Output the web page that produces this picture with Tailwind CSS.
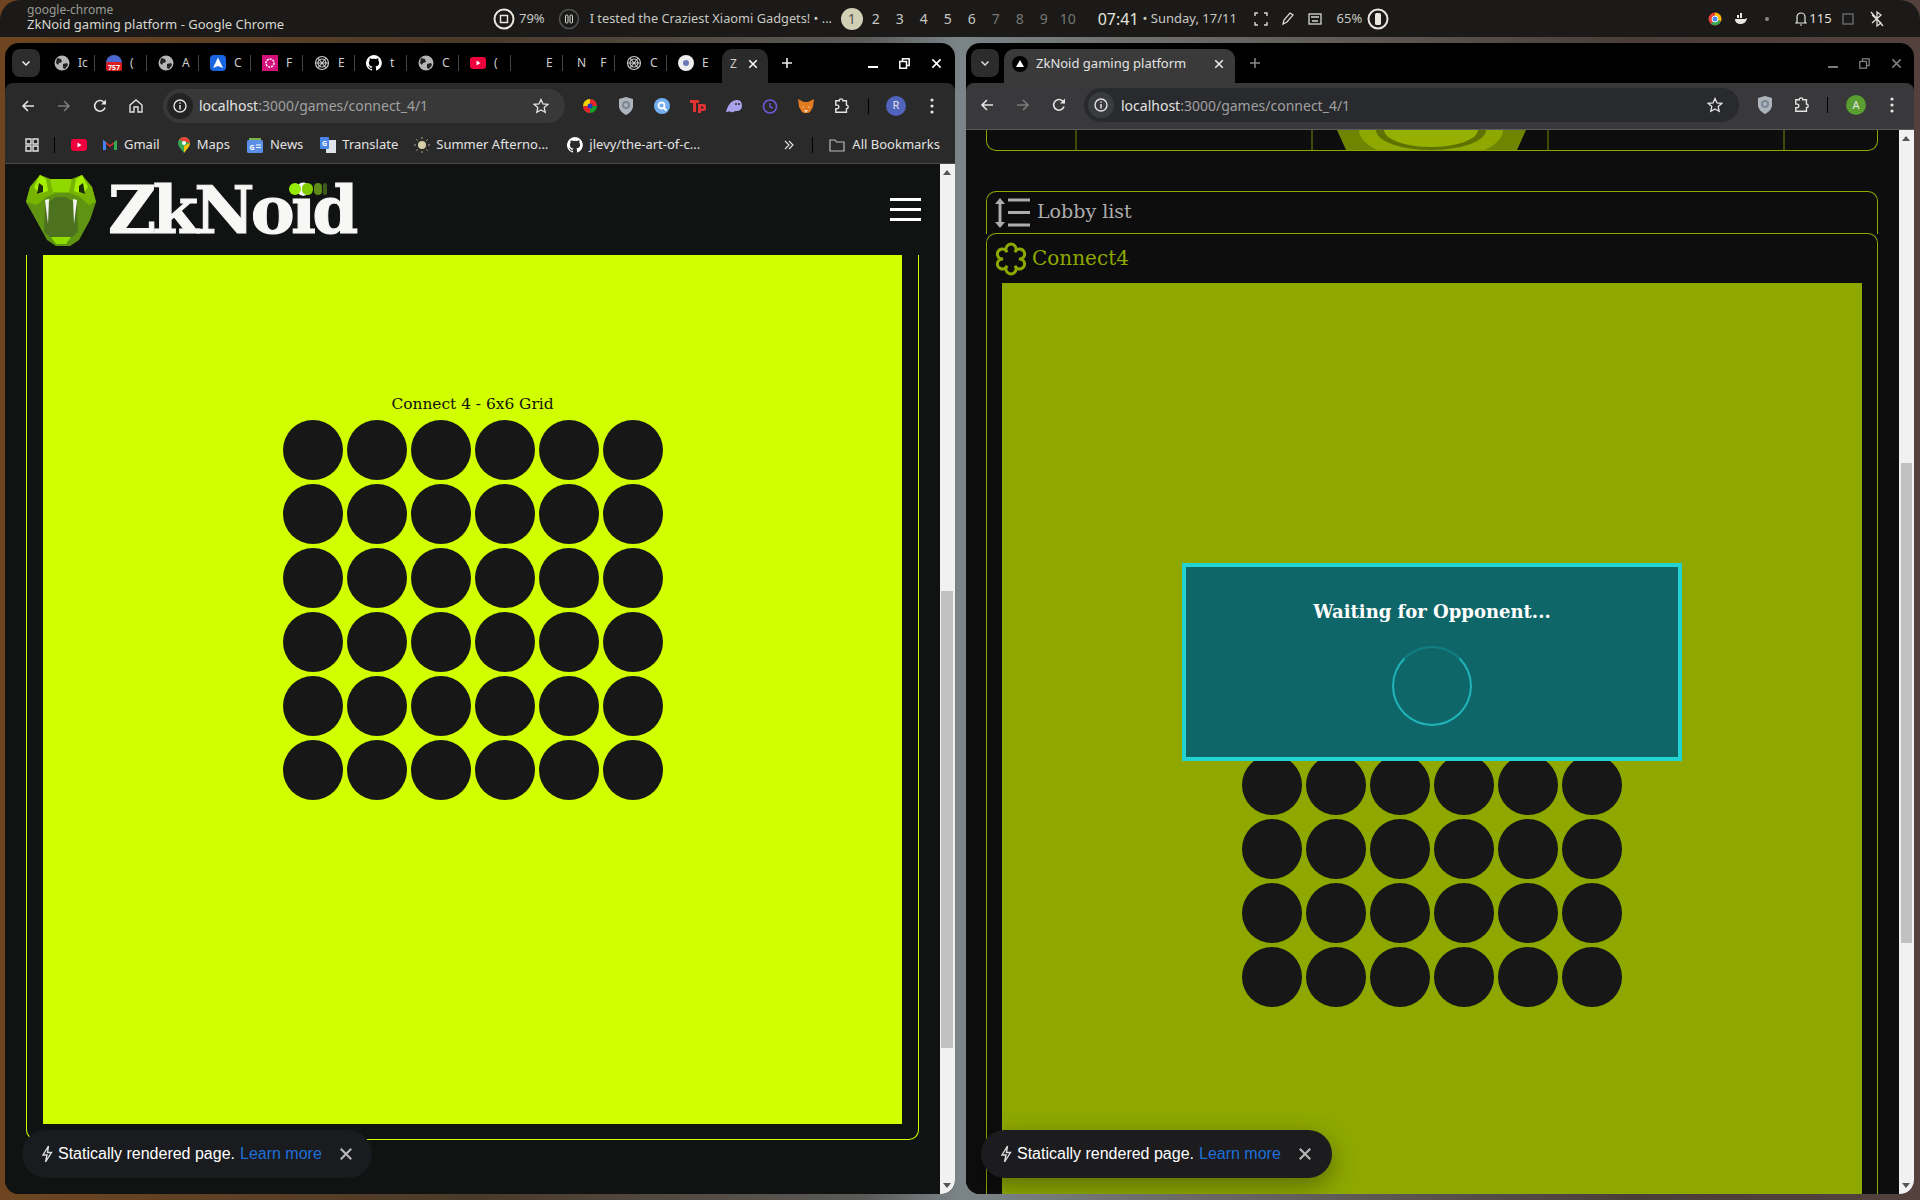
<!DOCTYPE html>
<html lang="en">
  <head>
    <meta charset="UTF-8" />
    <title>ZkNoid gaming platform - Google Chrome</title>
    <script src="https://cdn.jsdelivr.net/npm/@tailwindcss/browser@4"></script>
  </head>
  <body class="bg-black">
    <svg class="hidden">
      <symbol id="globe" viewBox="0 0 16 16"><circle cx="8" cy="8" r="7.5" fill="#b5b5b5" /><path d="M3 3l4 1 1 3-3 1-1 2-2-2zM9 9l4-1 1 2-3 4-2-1z" fill="#222" /></symbol>
      <symbol id="openai" viewBox="0 0 16 16"><g fill="none" stroke="#c8c8c8" stroke-width="1.2"><circle cx="8" cy="8" r="6.5" /><circle cx="8" cy="8" r="4" /><path d="M4 3l8 10M12 3L4 13M2 8h12" /></g></symbol>
      <symbol id="github" viewBox="0 0 16 16"><path fill="#fff" d="M8 0a8 8 0 0 0-2.5 15.6c.4.1.5-.2.5-.4v-1.4c-2.2.5-2.7-1-2.7-1-.4-.9-.9-1.200-.9-1.200-.7-.5.1-.5.1-.5.8.1 1.200.8 1.200.8.7 1.200 1.900.9 2.300.7.1-.5.3-.9.5-1.100-1.800-.2-3.600-.9-3.600-4 0-.9.3-1.600.8-2.100-.1-.2-.4-1 .1-2.100 0 0 .7-.2 2.200.8a7.600 7.600 0 0 1 4 0c1.500-1 2.200-.8 2.200-.8.4 1.100.2 1.900.1 2.100.5.6.8 1.300.8 2.100 0 3.100-1.900 3.700-3.700 3.900.3.300.6.800.6 1.500v2.200c0 .2.100.5.6.4A8 8 0 0 0 8 0z" /></symbol>
      <symbol id="yt" viewBox="0 0 16 12"><rect width="16" height="12" rx="3" fill="#f0003c" /><path d="M6.500 3.500l4 2.500-4 2.500z" fill="#fff" /></symbol>
      <symbol id="back" viewBox="0 0 16 16"><path d="M14 8H3M8 3L3 8l5 5" fill="none" stroke="currentColor" stroke-width="1.600" /></symbol>
      <symbol id="forward" viewBox="0 0 16 16"><path d="M2 8h11M8 3l5 5-5 5" fill="none" stroke="currentColor" stroke-width="1.600" /></symbol>
      <symbol id="reload" viewBox="0 0 16 16"><path d="M13 9.500A5.300 5.300 0 1 1 11.800 4.200L13.500 6" fill="none" stroke="currentColor" stroke-width="1.600" /><path d="M14 1.500V6.500H9z" fill="currentColor" /></symbol>
      <symbol id="info" viewBox="0 0 16 16"><circle cx="8" cy="8" r="6" fill="none" stroke="currentColor" stroke-width="1.400" /><path d="M8 7v4.500M8 4.500v1.300" stroke="currentColor" stroke-width="1.500" /></symbol>
      <symbol id="star" viewBox="0 0 16 16"><path d="M8 1.500l2 4.400 4.800.5-3.600 3.200 1 4.700L8 11.900l-4.200 2.400 1-4.700L1.200 6.400 6 5.900z" fill="none" stroke="currentColor" stroke-width="1.300" /></symbol>
      <symbol id="puzzle" viewBox="0 0 18 18"><path d="M2 3h4a2 2 0 0 1 4 0h4v5a2 2 0 0 1 0 4v4H2v-4h1.500a2 2 0 0 0 0-4H2z" fill="none" stroke="currentColor" stroke-width="1.600" /></symbol>
      <symbol id="dots" viewBox="0 0 4 16"><circle cx="2" cy="2" r="1.600" fill="currentColor" /><circle cx="2" cy="8" r="1.600" fill="currentColor" /><circle cx="2" cy="14" r="1.600" fill="currentColor" /></symbol>
      <symbol id="shield" viewBox="0 0 16 18"><path d="M8 0l7 2v7c0 4-3 7-7 9-4-2-7-5-7-9V2z" fill="#aeb4bc" /><circle cx="8" cy="8" r="4" fill="#7d8794" /><circle cx="8" cy="8" r="2" fill="#aeb4bc" /></symbol>
      <symbol id="close" viewBox="0 0 12 12"><path d="M1.500 1.500l9 9M10.500 1.500l-9 9" stroke="currentColor" stroke-width="1.800" /></symbol>
      <symbol id="bolt" viewBox="0 0 12 18"><path d="M7.500 1L2 10h4l-1.500 7L10.500 7.500H6.500z" fill="none" stroke="currentColor" stroke-width="1.400" /></symbol>
    </svg>

    <div class="relative w-[1920px] h-[1200px] overflow-hidden bg-[linear-gradient(90deg,#6e4520_0%,#4a3a2a_25%,#5a5a58_45%,#7b8488_50%,#6d6d6a_60%,#4a3d38_85%,#54413e_100%)]" style="font-family: 'Noto Sans', sans-serif">
      <!-- top bar -->
      <div class="absolute inset-x-0 top-0 h-[37px] bg-[#1b1a19] rounded-t-[20px] flex items-center text-[#d8d8d0]">
        <div class="ml-[27px] w-[466px] leading-[14px] pb-[4px]">
          <div class="text-[12px] text-[#9a9a94]">google-chrome</div>
          <div class="text-[13px] whitespace-nowrap">ZkNoid gaming platform - Google Chrome</div>
        </div>
        <svg class="w-[22px] h-[22px]" viewBox="0 0 22 22"><circle cx="11" cy="11" r="9.500" fill="none" stroke="#e8e8e0" stroke-width="2" /><rect x="7.500" y="7.500" width="7" height="7" fill="none" stroke="#e8e8e0" stroke-width="1.500" /></svg>
        <span class="ml-[4px] text-[13px] text-[#c8c8c0]">79%</span>
        <svg class="ml-[13px] w-[22px] h-[22px]" viewBox="0 0 22 22"><circle cx="11" cy="11" r="9.500" fill="none" stroke="#555" stroke-width="1.500" /><rect x="7.500" y="7" width="2.500" height="8" rx="1" fill="none" stroke="#d8d8d0" /><rect x="12" y="7" width="2.500" height="8" rx="1" fill="none" stroke="#d8d8d0" /></svg>
        <span class="ml-[10px] w-[251px] text-[12.8px] text-[#c8c8c0] whitespace-nowrap">I tested the Craziest Xiaomi Gadgets! • ...</span>
        <div class="flex items-center text-[14px] text-[#c8c8c0]">
          <span class="w-[22px] h-[22px] mr-[1px] rounded-full bg-[#d2d0b4] text-[#555] flex items-center justify-center">1</span>
          <span class="w-[24px] text-center">2</span><span class="w-[24px] text-center">3</span><span class="w-[24px] text-center">4</span><span class="w-[24px] text-center">5</span><span class="w-[24px] text-center">6</span>
          <span class="w-[24px] text-center text-[#77776f]">7</span><span class="w-[24px] text-center text-[#77776f]">8</span><span class="w-[24px] text-center text-[#77776f]">9</span><span class="w-[24px] text-center text-[#77776f]">10</span>
        </div>
        <span class="ml-[18px] text-[16px] text-[#e4e4dc]">07:41</span>
        <span class="ml-[4px] text-[13px] w-[106px] text-[#c8c8c0] whitespace-nowrap">• Sunday, 17/11</span>
        <svg class="ml-[5px] w-[14px] h-[14px] text-[#d8d8d0]" viewBox="0 0 14 14"><path d="M1 4V1h3M10 1h3v3M13 10v3h-3M4 13H1v-3" fill="none" stroke="currentColor" stroke-width="1.400" /></svg>
        <svg class="ml-[13px] w-[14px] h-[14px]" viewBox="0 0 14 14"><path d="M2 12l1-4 6-7 3 2-6 7z" fill="none" stroke="#d8d8d0" stroke-width="1.300" /></svg>
        <svg class="ml-[13px] w-[14px] h-[14px]" viewBox="0 0 14 14"><rect x="1" y="2" width="12" height="10" fill="none" stroke="#d8d8d0" stroke-width="1.300" /><path d="M3 5h8M4 9h6" stroke="#d8d8d0" stroke-width="1.300" /></svg>
        <span class="ml-[15px] text-[13px] text-[#c8c8c0]">65%</span>
        <svg class="ml-[5px] w-[22px] h-[22px]" viewBox="0 0 22 22"><circle cx="11" cy="11" r="9.500" fill="none" stroke="#e8e8e0" stroke-width="2" /><rect x="8" y="5" width="6" height="12" rx="1.500" fill="#e8e8e0" /></svg>
        <div class="ml-[319px] flex items-center">
          <svg class="w-[14px] h-[14px]" viewBox="0 0 14 14"><circle cx="7" cy="7" r="6.500" fill="#ea4335" /><path d="M7 7l6 2a6.500 6.500 0 0 1-10 3z" fill="#34a853" /><path d="M7 .5a6.500 6.500 0 0 1 6 8.500L7 7z" fill="#fbbc05" /><circle cx="7" cy="7" r="3" fill="#4285f4" stroke="#fff" /></svg>
          <svg class="ml-[12px] w-[14px] h-[14px]" viewBox="0 0 14 14"><path d="M1 7h10l2-1c0 2-2 6-6 6S1 10 1 7z" fill="#e8e8e0" /><path d="M3 3h2v3H3zM6 1h2v5H6z" fill="#e8e8e0" /></svg>
          <span class="ml-[17px] w-[4px] h-[4px] rounded-full bg-[#888]"></span>
          <svg class="ml-[26px] w-[12px] h-[15px]" viewBox="0 0 12 15"><path d="M2 11V6a4 4 0 0 1 8 0v5l1 1H1zM5 14h2" fill="none" stroke="#e8e8e0" stroke-width="1.200" /></svg>
          <span class="ml-[2px] text-[13px] text-[#e0e0d8]">115</span>
          <svg class="ml-[10px] w-[12px] h-[12px]" viewBox="0 0 12 12"><rect x="1" y="1" width="10" height="10" fill="none" stroke="#666" stroke-width="1.500" /></svg>
          <svg class="ml-[16px] w-[14px] h-[16px]" viewBox="0 0 14 16"><path d="M2 4l9 8-4 3V1l4 3-9 8M1 1l12 14" fill="none" stroke="#e0e0d8" stroke-width="1.300" /></svg>
        </div>
      </div>

      <!-- left window -->
      <div class="absolute left-[5px] top-[43px] w-[950px] h-[1151px] rounded-t-[14px] rounded-b-[14px] overflow-hidden bg-black flex flex-col">
        <div class="h-[40px] flex items-center shrink-0 relative">
          <div class="ml-[7px] w-[28px] h-[28px] rounded-lg bg-[#2d2d2d] flex items-center justify-center">
            <svg class="w-[10px] h-[10px]" viewBox="0 0 10 10"><path d="M1.500 3.500L5 7l3.500-3.500" fill="none" stroke="#eee" stroke-width="1.500" /></svg>
          </div>
          <div class="ml-[3px] flex items-center text-[12px] text-[#cfcfcf]">
            <div class="w-[52px] h-[16px] flex items-center border-r border-[#444]"><svg class="ml-[11px] w-[16px] h-[16px]"><use href="#globe" /></svg><span class="ml-[8px]">Ic</span></div>
            <div class="w-[52px] h-[16px] flex items-center border-r border-[#444]"><svg class="ml-[11px] w-[16px] h-[16px]" viewBox="0 0 16 16"><path d="M0 8a8 8 0 0 1 16 0z" fill="#4a68d0" /><rect y="7" width="16" height="9" rx="2" fill="#d81e1e" /><text x="8" y="14.500" font-size="7" font-weight="700" text-anchor="middle" fill="#fff">757</text></svg><span class="ml-[8px]">(</span></div>
            <div class="w-[52px] h-[16px] flex items-center border-r border-[#444]"><svg class="ml-[11px] w-[16px] h-[16px]"><use href="#globe" /></svg><span class="ml-[8px]">A</span></div>
            <div class="w-[52px] h-[16px] flex items-center border-r border-[#444]"><svg class="ml-[11px] w-[16px] h-[16px]" viewBox="0 0 16 16"><rect width="16" height="16" rx="4" fill="#1a66e0" /><path d="M8 2.500L13 13l-5-2-5 2z" fill="#fff" /></svg><span class="ml-[8px]">C</span></div>
            <div class="w-[52px] h-[16px] flex items-center border-r border-[#444]"><svg class="ml-[11px] w-[16px] h-[16px]" viewBox="0 0 16 16"><rect width="16" height="16" fill="#d4107a" /><circle cx="8" cy="8" r="4" fill="none" stroke="#fff" stroke-width="1.500" stroke-dasharray="2 1" /></svg><span class="ml-[8px]">F</span></div>
            <div class="w-[52px] h-[16px] flex items-center border-r border-[#444]"><svg class="ml-[11px] w-[16px] h-[16px]"><use href="#openai" /></svg><span class="ml-[8px]">E</span></div>
            <div class="w-[52px] h-[16px] flex items-center border-r border-[#444]"><svg class="ml-[11px] w-[16px] h-[16px]"><use href="#github" /></svg><span class="ml-[8px]">t</span></div>
            <div class="w-[52px] h-[16px] flex items-center border-r border-[#444]"><svg class="ml-[11px] w-[16px] h-[16px]"><use href="#globe" /></svg><span class="ml-[8px]">C</span></div>
            <div class="w-[52px] h-[16px] flex items-center border-r border-[#444]"><svg class="ml-[11px] w-[16px] h-[12px]"><use href="#yt" /></svg><span class="ml-[8px]">(</span></div>
            <div class="w-[52px] h-[16px] flex items-center border-r border-[#444]"><span class="ml-[35px]">E</span></div>
            <div class="w-[52px] h-[16px] flex items-center border-r border-[#444]"><span class="ml-[14px]">N</span><span class="ml-[14px]">F</span></div>
            <div class="w-[52px] h-[16px] flex items-center border-r border-[#444]"><svg class="ml-[11px] w-[16px] h-[16px]"><use href="#openai" /></svg><span class="ml-[8px]">C</span></div>
            <div class="w-[52px] h-[16px] flex items-center"><svg class="ml-[11px] w-[16px] h-[16px]" viewBox="0 0 16 16"><circle cx="8" cy="8" r="8" fill="#eee" /><circle cx="8" cy="8" r="3" fill="#6a78b8" /></svg><span class="ml-[8px]">E</span></div>
            <div class="ml-[3px] w-[46px] h-[34px] mt-[6px] pb-[5px] rounded-t-[10px] bg-[#2a2a2a] flex items-center"><span class="ml-[8px]">Z</span><svg class="ml-[11px] w-[10px] h-[10px] text-white"><use href="#close" /></svg></div>
            <svg class="ml-[13px] w-[12px] h-[12px]" viewBox="0 0 12 12"><path d="M6 1v10M1 6h10" stroke="#eee" stroke-width="1.600" /></svg>
          </div>
          <div class="ml-auto mr-[13px] flex items-center gap-[21px]">
            <span class="w-[10px] h-[2px] bg-white mt-[8px]"></span>
            <svg class="w-[11px] h-[11px]" viewBox="0 0 11 11"><rect x="3.500" y=".8" width="6.700" height="6.700" fill="none" stroke="#fff" stroke-width="1.500" /><rect x=".8" y="3.500" width="6.700" height="6.700" fill="#000" stroke="#fff" stroke-width="1.500" /></svg>
            <svg class="w-[11px] h-[11px] text-white"><use href="#close" /></svg>
          </div>
        </div>
        <div class="h-[47px] pb-[2px] bg-[#2a2a2a] rounded-t-[8px] flex items-center shrink-0 text-[#e3e3e3]">
          <svg class="ml-[15px] w-[16px] h-[16px]"><use href="#back" /></svg>
          <svg class="ml-[20px] w-[16px] h-[16px] text-[#7a7a7a]"><use href="#forward" /></svg>
          <svg class="ml-[20px] w-[16px] h-[16px]"><use href="#reload" /></svg>
          <svg class="ml-[20px] w-[16px] h-[16px]" viewBox="0 0 16 16"><path d="M2 7l6-5 6 5v7h-4v-5H6v5H2z" fill="none" stroke="currentColor" stroke-width="1.400" /></svg>
          <div class="ml-[19px] w-[402px] h-[34px] rounded-full bg-[#383838] flex items-center">
            <div class="ml-[4px] w-[26px] h-[26px] rounded-full bg-[#232323] flex items-center justify-center"><svg class="w-[16px] h-[16px]"><use href="#info" /></svg></div>
            <span class="ml-[6px] text-[14px] whitespace-nowrap text-[#e3e3e3]">localhost<span class="text-[#a0a0a0]">:3000/games/connect_4/1</span></span>
            <svg class="ml-auto mr-[16px] w-[16px] h-[16px]"><use href="#star" /></svg>
          </div>
          <div class="ml-[17px] flex items-center gap-[20px]">
            <svg class="w-[16px] h-[16px]" viewBox="0 0 16 16"><circle cx="8" cy="8" r="7" fill="#18a02a" /><path d="M8 1a7 7 0 0 1 7 7H8zM1 8a7 7 0 0 0 7 7V8z" fill="#e8222a" /><path d="M8 1a7 7 0 0 0-7 7h7z" fill="#f2d500" /><circle cx="8" cy="8" r="2.500" fill="#2038c8" /></svg>
            <svg class="w-[16px] h-[18px]"><use href="#shield" /></svg>
            <svg class="w-[16px] h-[16px]" viewBox="0 0 16 16"><circle cx="8" cy="8" r="8" fill="#72aef0" /><circle cx="7.500" cy="7.500" r="3" fill="none" stroke="#fff" stroke-width="1.800" /><path d="M10 10l2.500 2.500" stroke="#fff" stroke-width="1.800" /></svg>
            <svg class="w-[16px] h-[16px]" viewBox="0 0 16 16"><path d="M0 2h9v3H6v9H3V5H0zM8 6h5a3 3 0 0 1 0 7h-2v2H8zM11 8.500v2h1.500a1 1 0 0 0 0-2z" fill="#e03232" /></svg>
            <svg class="w-[16px] h-[16px]" viewBox="0 0 16 16"><path d="M0 14C2 6 6 2 11 2c4 0 5 3 5 6s-2 5-6 5c-2 0-3 2-5 1s-3 0-5 0z" fill="#a9a1ea" /><circle cx="10" cy="6" r="1" fill="#2a2a2a" /><circle cx="13" cy="6" r="1" fill="#2a2a2a" /></svg>
            <svg class="w-[16px] h-[16px]" viewBox="0 0 16 16"><circle cx="8" cy="8.500" r="6.500" fill="none" stroke="#6a5ad8" stroke-width="1.600" /><path d="M8 5v4l3 1" fill="none" stroke="#6a5ad8" stroke-width="1.400" /></svg>
            <svg class="w-[16px] h-[16px]" viewBox="0 0 16 16"><path d="M0 1l6 3h4l6-3-1 8-3 5-2 1H6l-2-1-3-5z" fill="#e27a20" /><path d="M4 8l2 1-1 1zM12 8l-2 1 1 1zM6 12h4l-2 3z" fill="#fff" opacity=".7" /></svg>
            <svg class="w-[16px] h-[16px]"><use href="#puzzle" /></svg>
          </div>
          <span class="ml-[18px] w-[1px] h-[16px] bg-black"></span>
          <span class="ml-[17px] w-[20px] h-[20px] rounded-full bg-[#5164bd] text-[11px] flex items-center justify-center">R</span>
          <svg class="ml-[24px] w-[4px] h-[16px]"><use href="#dots" /></svg>
        </div>
        <div class="h-[29px] pb-[4px] bg-[#2a2a2a] border-b border-[#4a4a4a] box-content flex items-center shrink-0 text-[13px] text-[#e3e3e3] whitespace-nowrap">
          <svg class="ml-[20px] w-[14px] h-[14px]" viewBox="0 0 14 14"><path d="M1 1h5v5H1zM8 1h5v5H8zM1 8h5v5H1zM8 8h5v5H8z" fill="none" stroke="#e3e3e3" stroke-width="1.400" /></svg>
          <span class="ml-[15px] w-[1px] h-[16px] bg-black"></span>
          <svg class="ml-[16px] w-[16px] h-[12px]"><use href="#yt" /></svg>
          <svg class="ml-[16px] w-[14px] h-[11px]" viewBox="0 0 14 11"><path d="M0 11V1l7 5 7-5v10h-3V5L7 8 3 5v6z" fill="#d93025" /><path d="M0 11V1l3 2v8z" fill="#4285f4" /><path d="M14 11V1l-3 2v8z" fill="#34a853" /></svg>
          <span class="ml-[7px]">Gmail</span>
          <svg class="ml-[18px] w-[12px] h-[16px]" viewBox="0 0 12 16"><path d="M6 0a6 6 0 0 1 6 6c0 3-3 6-6 10C3 12 0 9 0 6a6 6 0 0 1 6-6z" fill="#34a853" /><path d="M6 0a6 6 0 0 1 6 6L1 3a6 6 0 0 1 5-3z" fill="#ea4335" /><path d="M12 6c0 3-3 6-6 10V9z" fill="#fbbc05" /><circle cx="6" cy="6" r="2" fill="#fff" /></svg>
          <span class="ml-[7px]">Maps</span>
          <svg class="ml-[17px] w-[16px] h-[16px]" viewBox="0 0 16 16"><rect y="3" width="16" height="13" rx="1.500" fill="#5b8fe8" /><path d="M2 3V1h12v2z" fill="#7cb342" /><text x="5" y="13" font-size="7" font-weight="700" text-anchor="middle" fill="#fff">G</text><path d="M9 8h5M9 10.500h5" stroke="#fff" /></svg>
          <span class="ml-[7px]">News</span>
          <svg class="ml-[17px] w-[16px] h-[16px]" viewBox="0 0 16 16"><rect x="6" y="3" width="10" height="13" fill="#dfe3ea" /><rect width="9" height="12" rx="1" fill="#4a86e8" /><text x="4.500" y="9" font-size="7" font-weight="700" text-anchor="middle" fill="#fff">G</text></svg>
          <span class="ml-[6px]">Translate</span>
          <svg class="ml-[16px] w-[16px] h-[16px]" viewBox="0 0 16 16"><circle cx="8" cy="8" r="4" fill="#d8cfa8" /><path d="M8 0v2M8 14v2M0 8h2M14 8h2M2.300 2.300l1.400 1.400M12.300 12.300l1.400 1.400M13.700 2.300l-1.400 1.400M3.700 12.300l-1.400 1.400" stroke="#b0a888" /></svg>
          <span class="ml-[6px]">Summer Afterno...</span>
          <svg class="ml-[19px] w-[16px] h-[16px]"><use href="#github" /></svg>
          <span class="ml-[6px] w-[195px]">jlevy/the-art-of-c...</span>
          <svg class="w-[10px] h-[10px]" viewBox="0 0 10 10"><path d="M1 1l4 4-4 4M5 1l4 4-4 4" fill="none" stroke="#ddd" stroke-width="1.200" /></svg>
          <span class="ml-[18px] w-[1px] h-[16px] bg-black"></span>
          <svg class="ml-[16px] w-[16px] h-[14px]" viewBox="0 0 16 14"><path d="M1 2h5l1.500 2H15v9H1z" fill="none" stroke="#bbb" stroke-width="1.200" /></svg>
          <span class="ml-[7px]">All Bookmarks</span>
        </div>
        <div class="flex-1 min-h-0 flex bg-[#111212] relative">
          <div class="flex-1 flex flex-col">
            <div class="h-[91px] shrink-0 flex items-center">
              <svg class="ml-[21px] w-[70px] h-[72px]" viewBox="0 0 70 72">
                <path d="M14 1l10 4h22l10-4 10 12 4 15-6 18-11 20-9 6H30l-9-6L10 46 0 28 4 13z" fill="#5f9412" />
                <path d="M14 1l10 4h22l10-4 10 12 4 15-7 3-9-8-10-4H30l-10 4-9 8-11-3 4-15z" fill="#76b400" />
                <path d="M24 5h22l-3 13H27z" fill="#8fd800" />
                <path d="M14 1l6 4 2 12-9 3-5-7z" fill="#a5ef00" />
                <path d="M56 1l-6 4-2 12 9 3 5-7z" fill="#a5ef00" />
                <path d="M13 9l4 3 0 6-6 2zM57 9l-4 3 0 6 6 2z" fill="#1c2a08" />
                <path d="M19 30l11-7h10l11 7 1 28-7 6H25l-7-6z" fill="#4c7220" />
                <path d="M25 63h20l-5 7H30z" fill="#8fdc00" />
                <path d="M19 26l4-1-1 25zM51 26l-4-1 1 25z" fill="#f4f4f4" />
              </svg>
              <div class="relative ml-[12px]">
                <span class="block text-[66px] leading-none font-bold text-[#f7f7f5] tracking-[-3.8px] [-webkit-text-stroke:1px_#f7f7f5]" style="font-family: 'DejaVu Serif', serif">ZkNoid</span>
                <div class="absolute right-[28px] top-[6px] flex gap-[1px]">
                  <span class="w-[12px] h-[12px] rounded-full bg-[#96ec00]"></span>
                  <span class="w-[11px] h-[12px] rounded-full bg-[#80cc00]"></span>
                  <span class="w-[8px] h-[12px] rounded-full bg-[#5d8a18]"></span>
                  <span class="w-[4px] h-[12px] rounded-full bg-[#3f5c1c]"></span>
                </div>
              </div>
              <div class="ml-auto mr-[19px] w-[31px] flex flex-col gap-[7px]">
                <span class="h-[3px] bg-white"></span><span class="h-[3px] bg-white"></span><span class="h-[3px] bg-white"></span>
              </div>
            </div>
            <div class="mx-[21px] h-[885px] border-x border-b border-[#d2ff00] rounded-b-[10px] px-[16px] pb-[15px]">
              <div class="h-full bg-[#d2ff00] flex flex-col items-center pt-[139px]" style="font-family: 'DejaVu Serif', serif">
                <div class="text-[15.4px] leading-[20px] text-[#111] mb-[6px] whitespace-nowrap">Connect 4 - 6x6 Grid</div>
                <div data-board class="grid grid-cols-6 gap-[4px]"></div>
              </div>
            </div>
          </div>
          <div class="w-[15px] bg-[#f1f1f1] relative">
            <span class="absolute left-[3px] top-[6px] border-x-[4px] border-x-transparent border-b-[5px] border-b-[#555]"></span>
            <div class="absolute left-[1px] right-[2px] top-[427px] h-[457px] bg-[#c1c1c1]"></div>
            <span class="absolute left-[3px] bottom-[6px] border-x-[4px] border-x-transparent border-t-[5px] border-t-[#555]"></span>
          </div>
          <div class="absolute left-[17px] top-[966px] h-[48px] w-[350px] rounded-full bg-[#1a1b1f] flex items-center text-white text-[16px] whitespace-nowrap" style="font-family: 'Liberation Sans', sans-serif">
            <svg class="ml-[19px] w-[12px] h-[18px] text-[#ddd]"><use href="#bolt" /></svg>
            <span class="ml-[5px]">Statically rendered page.</span>
            <span class="ml-[5px] text-[#1f6fd8]">Learn more</span>
            <svg class="ml-[17px] w-[14px] h-[14px] text-[#b8b8b8]"><use href="#close" /></svg>
          </div>
        </div>
      </div>

      <!-- right window -->
      <div class="absolute left-[966px] top-[43px] w-[948px] h-[1151px] rounded-t-[14px] rounded-b-[14px] overflow-hidden bg-black flex flex-col">
        <div class="h-[40px] flex items-center shrink-0">
          <div class="ml-[5px] w-[28px] h-[28px] rounded-lg bg-[#2c2c2c] flex items-center justify-center">
            <svg class="w-[10px] h-[10px]" viewBox="0 0 10 10"><path d="M1.500 3.500L5 7l3.500-3.500" fill="none" stroke="#ddd" stroke-width="1.500" /></svg>
          </div>
          <div class="ml-[5px] mt-[6px] w-[231px] h-[34px] pb-[5px] rounded-t-[10px] bg-[#3a3a3a] flex items-center text-[13px] text-[#e3e3e3]">
            <svg class="ml-[8px] w-[16px] h-[16px]" viewBox="0 0 16 16"><circle cx="8" cy="8" r="8" fill="#000" /><path d="M8 4l4 7H4z" fill="#fff" /></svg>
            <span class="ml-[8px]">ZkNoid gaming platform</span>
            <svg class="ml-auto mr-[11px] w-[10px] h-[10px] text-[#eee]"><use href="#close" /></svg>
          </div>
          <svg class="ml-[14px] w-[12px] h-[12px]" viewBox="0 0 12 12"><path d="M6 1v10M1 6h10" stroke="#888" stroke-width="1.500" /></svg>
          <div class="ml-auto mr-[12px] flex items-center gap-[21px] text-[#7c7c7c]">
            <span class="w-[10px] h-[1.500px] bg-[#7c7c7c] mt-[8px]"></span>
            <svg class="w-[11px] h-[11px]" viewBox="0 0 11 11"><rect x="3.500" y=".8" width="6.700" height="6.700" fill="none" stroke="#7c7c7c" stroke-width="1.300" /><rect x=".8" y="3.500" width="6.700" height="6.700" fill="#000" stroke="#7c7c7c" stroke-width="1.300" /></svg>
            <svg class="w-[11px] h-[11px]"><use href="#close" /></svg>
          </div>
        </div>
        <div class="h-[47px] pb-[2px] bg-[#39393b] border-b border-[#5a5a5a] rounded-t-[8px] flex items-center shrink-0 text-[#e3e3e3]">
          <svg class="ml-[13px] w-[16px] h-[16px]"><use href="#back" /></svg>
          <svg class="ml-[20px] w-[16px] h-[16px] text-[#7a7a7a]"><use href="#forward" /></svg>
          <svg class="ml-[20px] w-[16px] h-[16px]"><use href="#reload" /></svg>
          <div class="ml-[17px] w-[655px] h-[34px] rounded-full bg-[#292a2d] flex items-center">
            <div class="ml-[4px] w-[26px] h-[26px] rounded-full bg-[#3a3b3e] flex items-center justify-center"><svg class="w-[16px] h-[16px]"><use href="#info" /></svg></div>
            <span class="ml-[7px] text-[14px] whitespace-nowrap">localhost<span class="text-[#a0a0a0]">:3000/games/connect_4/1</span></span>
            <svg class="ml-auto mr-[16px] w-[16px] h-[16px]"><use href="#star" /></svg>
          </div>
          <svg class="ml-[18px] w-[16px] h-[18px]"><use href="#shield" /></svg>
          <svg class="ml-[21px] w-[16px] h-[16px]"><use href="#puzzle" /></svg>
          <span class="ml-[17px] w-[1px] h-[16px] bg-black"></span>
          <span class="ml-[18px] w-[20px] h-[20px] rounded-full bg-[#5a9e32] text-[11px] flex items-center justify-center">A</span>
          <svg class="ml-[24px] w-[4px] h-[16px]"><use href="#dots" /></svg>
        </div>
        <div class="flex-1 min-h-0 flex bg-[#0d0d0d] relative">
          <div class="flex-1 min-w-0 pl-[20px] pr-[21px] overflow-hidden" style="font-family: 'DejaVu Serif', serif">
            <div class="h-[21px] border-x border-b border-[#8ea800] rounded-b-[10px] grid grid-cols-[90px_236px_236px_236px_1fr] relative overflow-hidden">
              <div class="border-r-2 border-[#3f4a08]"></div>
              <div class="border-r-2 border-[#3f4a08]"></div>
              <div class="border-r-2 border-[#3f4a08]"></div>
              <div class="border-r-2 border-[#3f4a08]"></div>
              <svg class="absolute left-[350px] top-0 w-[189px] h-[20px]" viewBox="0 0 189 20"><path d="M0 0L9 20H180L189 0z" fill="#6f8500" /><path d="M22 0a72 30 0 0 0 144 0z" fill="#8ea800" /><path d="M39 0a55 20 0 0 0 110 0z" fill="#5f7200" /><path d="M47 0a47 17 0 0 0 94 0z" fill="#95b000" /></svg>
            </div>
            <div class="mt-[40px] h-[43px] pb-[4px] border-x border-t border-[#8ea800] rounded-t-[10px] flex items-center text-[#adadad] text-[19px]">
              <svg class="ml-[7px] w-[37px] h-[30px] mt-[4px]" viewBox="0 0 37 30"><path d="M6 0l5 6H7.500v18H11l-5 6-5-6h3.500V6H1z" fill="#adadad" /><path d="M14 2h22M14 14.500h22M14 27h22" stroke="#adadad" stroke-width="3" /></svg>
              <span class="ml-[6px]">Lobby list</span>
            </div>
            <div class="border-x border-t border-[#8ea800] rounded-t-[10px] pb-4 -mt-px h-[1000px]">
              <div class="h-[49px] pb-[2px] flex items-center text-[#8ea800] text-[20px]">
                <svg class="ml-[7px] w-[34px] h-[36px] mt-[2px]" viewBox="-17 -17 34 34"><path d="M-4 -6.930A5 5 0 1 1 4 -6.930A5 5 0 1 1 8 0A5 5 0 1 1 4 6.930A5 5 0 1 1 -4 6.930A5 5 0 1 1 -8 0A5 5 0 1 1 -4 -6.930Z" fill="none" stroke="#8ea800" stroke-width="3" /></svg>
                <span class="ml-[4px]">Connect4</span>
              </div>
              <div class="relative mx-[15px] h-[940px] bg-[#8ea800] flex flex-col items-center pt-[344px]">
                <div data-board class="grid grid-cols-6 gap-[4px]"></div>
                <div class="absolute left-[180px] top-[280px] w-[500px] h-[198px] border-4 border-[#22d3d3] bg-[#0f6669] flex flex-col items-center">
                  <div class="mt-[32px] text-[18px] leading-[26px] font-bold text-white">Waiting for Opponent...</div>
                  <div class="mt-[21px] w-[80px] h-[80px] rounded-full border-2 border-[#22c8cc]/80 border-t-[#22c8cc]/25"></div>
                </div>
              </div>
            </div>
          </div>
          <div class="w-[15px] shrink-0 bg-[#f1f1f1] relative">
            <span class="absolute left-[3px] top-[6px] border-x-[4px] border-x-transparent border-b-[5px] border-b-[#555]"></span>
            <div class="absolute left-[2px] right-[2px] top-[333px] h-[480px] bg-[#c1c1c1]"></div>
            <span class="absolute left-[3px] bottom-[6px] border-x-[4px] border-x-transparent border-t-[5px] border-t-[#555]"></span>
          </div>
          <div class="absolute left-[15px] top-[1000px] h-[48px] w-[351px] rounded-full bg-[#1c1c1f] shadow-[0_8px_24px_rgba(0,0,0,0.35)] flex items-center text-white text-[16px] whitespace-nowrap" style="font-family: 'Liberation Sans', sans-serif">
            <svg class="ml-[19px] w-[12px] h-[18px] text-[#ddd]"><use href="#bolt" /></svg>
            <span class="ml-[5px]">Statically rendered page.</span>
            <span class="ml-[5px] text-[#1f6fd8]">Learn more</span>
            <svg class="ml-[17px] w-[14px] h-[14px] text-[#b8b8b8]"><use href="#close" /></svg>
          </div>
        </div>
      </div>
    </div>

    <script>
      document.querySelectorAll('[data-board]').forEach((board) => {
        for (let i = 0; i < 36; i++) {
          const cell = document.createElement('div')
          cell.className = 'w-[60px] h-[60px] rounded-full bg-[#171717]'
          board.appendChild(cell)
        }
      })
    </script>
  </body>
</html>
